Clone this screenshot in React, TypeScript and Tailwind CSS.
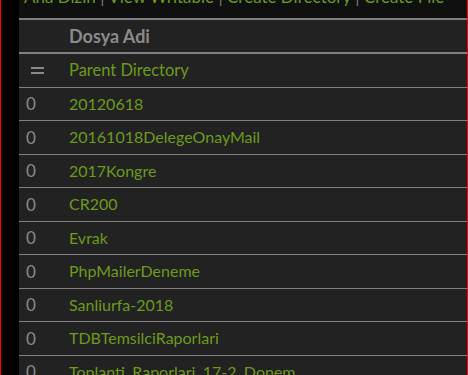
import React from 'react';

const rows = [
  '20120618',
  '20161018DelegeOnayMail',
  '2017Kongre',
  'CR200',
  'Evrak',
  'PhpMailerDeneme',
  'Sanliurfa-2018',
  'TDBTemsilciRaporlari',
  'Toplanti_Raporlari_17-2_Donem',
];

export default function App() {
  const font = { fontFamily: 'Lato, "Open Sans", sans-serif' };
  return (
    <div className="w-[468px] h-[375px] overflow-hidden bg-black flex" style={font}>
      <div className="w-px bg-[#ff0000] shrink-0" />
      <div className="w-[18px] shrink-0" />
      <div className="flex-1 flex flex-col">
        {/* Top links */}
        <div className="h-[18px] shrink-0 bg-[#101010] overflow-hidden px-[5px]">
          <div className="-mt-[13px] text-[17px] leading-[20px] text-[#6d9a1c] whitespace-nowrap">
            Ana Dizin <span className="text-[#7a7a7a]">|</span> View Writable{' '}
            <span className="text-[#7a7a7a]">|</span> Create Directory{' '}
            <span className="text-[#7a7a7a]">|</span> Create File
          </div>
        </div>

        {/* Table */}
        <div className="bg-[#222222] flex-1">
          <div className="flex items-center h-[36px] border-y-2 border-[#808080]">
            <div className="w-[50px]" />
            <div className="text-[18px] font-bold text-[#8a8a8a]">Dosya Adi</div>
          </div>
          <div className="flex items-center h-[33.5px] border-b border-[#808080]">
            <div className="w-[50px] pl-[12px] flex flex-col gap-[3px]">
              <div className="w-[13px] h-[2px] bg-[#8a8a8a]" />
              <div className="w-[13px] h-[2px] bg-[#8a8a8a]" />
            </div>
            <a className="text-[16.5px] text-[#6d9a1c]">Parent Directory</a>
          </div>
          {rows.map((r) => (
            <div key={r} className="flex items-center h-[33.5px] border-b border-[#808080]">
              <div className="w-[50px] pl-[7px] text-[17px] text-[#8a8a8a]">0</div>
              <a className="text-[16px] text-[#6d9a1c]">{r}</a>
            </div>
          ))}
        </div>
      </div>
      <div className="w-px bg-[#ff0000] shrink-0" />
    </div>
  );
}
